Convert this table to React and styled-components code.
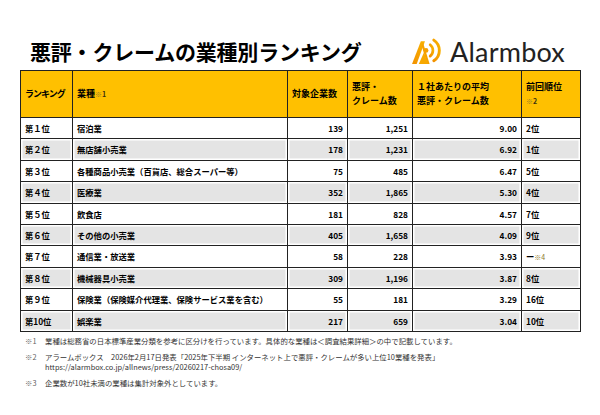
import React from 'react'
import styled, { createGlobalStyle } from 'styled-components'

const GlobalStyle = createGlobalStyle`
  html, body {
    margin: 0;
    padding: 0;
    background: #fff;
  }
  body {
    font-family: "Noto Sans CJK JP", "Noto Sans", sans-serif;
    color: #000;
  }
`

const Page = styled.div`
  width: 600px;
  height: 415px;
  padding: 0 20px;
  box-sizing: border-box;
  overflow: hidden;
`

const Header = styled.div`
  display: flex;
  justify-content: space-between;
  align-items: center;
  height: 70px;
  padding: 32px 15px 0 10px;
  box-sizing: border-box;
`

const Title = styled.h1`
  margin: 0;
  font-size: 21px;
  line-height: 1;
  font-weight: 700;
  letter-spacing: -0.2px;
`

const Logo = styled.div`
  display: flex;
  align-items: center;
  gap: 8px;
`

const LogoText = styled.span`
  font-family: Lato, "Noto Sans", sans-serif;
  font-size: 27px;
  line-height: 1;
  color: #222;
  letter-spacing: 0.2px;
`

const Table = styled.table`
  width: 560px;
  border-collapse: collapse;
  table-layout: fixed;
`

const Col = styled.col`
  width: ${(p) => p.$w}px;
`

const HeadRow = styled.tr`
  height: 47px;
`

const Th = styled.th`
  background: #ffc000;
  border: 1px solid #222;
  padding: 0 4px;
  font-size: 9px;
  line-height: 14px;
  font-weight: 700;
  text-align: left;
  vertical-align: middle;
  white-space: nowrap;
  letter-spacing: ${(p) => (p.$tight ? '-1px' : '0')};
`

const Mark = styled.span`
  font-size: 7px;
  font-weight: 400;
  letter-spacing: 0;
  color: #8c7a2e;
  & b {
    color: #3a3210;
    font-weight: 700;
  }
`

const Row = styled.tr`
  height: 21.4px;
`

const Td = styled.td`
  border: 1px solid #222;
  padding: 0 4px;
  font-size: 8.3px;
  line-height: 1;
  font-weight: 700;
  white-space: nowrap;
  text-align: ${(p) => p.$align || 'left'};
  background: ${(p) => (p.$shade ? '#e4e4e4' : '#fff')};
  box-shadow: ${(p) => (p.$shade ? 'inset 0 0 0 1.5px #fff' : 'none')};
`

const Notes = styled.div`
  margin-top: 4px;
  padding-left: 5px;
  display: flex;
  flex-direction: column;
  gap: 6px;
`

const Note = styled.div`
  display: grid;
  grid-template-columns: 20px 1fr;
  font-size: 7.4px;
  line-height: 10px;
  color: #333;
  white-space: nowrap;
`

const NoteMark = styled.span`
  color: #666;
`

const rows = [
  ['第１位', '宿泊業', '139', '1,251', '9.00', '2位'],
  ['第２位', '無店舗小売業', '178', '1,231', '6.92', '1位'],
  ['第３位', '各種商品小売業（百貨店、総合スーパー等）', '75', '485', '6.47', '5位'],
  ['第４位', '医療業', '352', '1,865', '5.30', '4位'],
  ['第５位', '飲食店', '181', '828', '4.57', '7位'],
  ['第６位', 'その他の小売業', '405', '1,658', '4.09', '9位'],
  ['第７位', '通信業・放送業', '58', '228', '3.93', null],
  ['第８位', '機械器具小売業', '309', '1,196', '3.87', '8位'],
  ['第９位', '保険業（保険媒介代理業、保険サービス業を含む）', '55', '181', '3.29', '16位'],
  ['第10位', '娯楽業', '217', '659', '3.04', '10位'],
]

function AlarmIcon() {
  return (
    <svg width="33" height="29" viewBox="0 0 30 28">
      <defs>
        <linearGradient id="ab" x1="0" y1="1" x2="1" y2="0">
          <stop offset="0" stopColor="#f29100" />
          <stop offset="1" stopColor="#f9b400" />
        </linearGradient>
      </defs>
      <path d="M2 26 L10.5 4 L14.5 4 L6.5 26 Z" fill="url(#ab)" />
      <path d="M12.5 5 L19 26 L16.5 26 L11.5 9 Z" fill="url(#ab)" />
      <path d="M8.5 26 L13.5 15 L17.5 26 Z" fill="#f7a800" />
      <circle cx="15.5" cy="13" r="2.3" fill="#f5a000" />
      <path d="M19.5 7.5 A7 7 0 0 1 19.5 18.5" stroke="url(#ab)" strokeWidth="2.6" fill="none" strokeLinecap="round" />
      <path d="M23 3 A12 12 0 0 1 23 23" stroke="url(#ab)" strokeWidth="2.8" fill="none" strokeLinecap="round" />
    </svg>
  )
}

export default function App() {
  return (
    <Page>
      <GlobalStyle />
      <Header>
        <Title>悪評・クレームの業種別ランキング</Title>
        <Logo>
          <AlarmIcon />
          <LogoText>Alarmbox</LogoText>
        </Logo>
      </Header>
      <Table>
        <colgroup>
          <Col $w={52} />
          <Col $w={215} />
          <Col $w={60} />
          <Col $w={65} />
          <Col $w={109} />
          <Col $w={59} />
        </colgroup>
        <thead>
          <HeadRow>
            <Th $tight>ランキング</Th>
            <Th>
              業種<Mark>※<b>1</b></Mark>
            </Th>
            <Th>対象企業数</Th>
            <Th>
              悪評・
              <br />
              クレーム数
            </Th>
            <Th>
              １社あたりの平均
              <br />
              悪評・クレーム数
            </Th>
            <Th>
              前回順位
              <br />
              <Mark>※<b>2</b></Mark>
            </Th>
          </HeadRow>
        </thead>
        <tbody>
          {rows.map((r, i) => {
            const shade = i % 2 === 1
            return (
              <Row key={r[0]}>
                <Td $shade={shade}>{r[0]}</Td>
                <Td $shade={shade}>{r[1]}</Td>
                <Td $shade={shade} $align="right">{r[2]}</Td>
                <Td $shade={shade} $align="right">{r[3]}</Td>
                <Td $shade={shade} $align="right">{r[4]}</Td>
                <Td $shade={shade}>
                  {r[5] || (
                    <>
                      ー<Mark>※4</Mark>
                    </>
                  )}
                </Td>
              </Row>
            )
          })}
        </tbody>
      </Table>
      <Notes>
        <Note>
          <NoteMark>※1</NoteMark>
          <span>業種は総務省の日本標準産業分類を参考に区分けを行っています。具体的な業種は＜調査結果詳細＞の中で記載しています。</span>
        </Note>
        <Note>
          <NoteMark>※2</NoteMark>
          <span>
            アラームボックス　2026年2月17日発表「2025年下半期 インターネット上で悪評・クレームが多い上位10業種を発表」
            <br />
            https://alarmbox.co.jp/allnews/press/20260217-chosa09/
          </span>
        </Note>
        <Note>
          <NoteMark>※3</NoteMark>
          <span>企業数が10社未満の業種は集計対象外としています。</span>
        </Note>
      </Notes>
    </Page>
  )
}
